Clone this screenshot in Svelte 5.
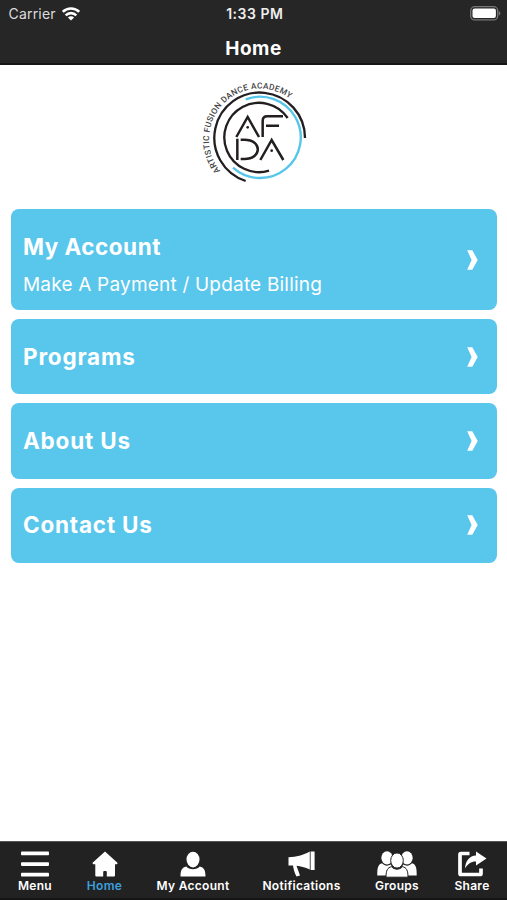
<script>
  const links = [
    { title: "My Account", detail: "Make A Payment / Update Billing" },
    { title: "Programs" },
    { title: "About Us" },
    { title: "Contact Us" }
  ];

  const tabs = [
    { id: "menu", label: "Menu", width: 70 },
    { id: "home", label: "Home", width: 69 },
    { id: "account", label: "My Account", width: 108 },
    { id: "notifications", label: "Notifications", width: 109 },
    { id: "groups", label: "Groups", width: 82 },
    { id: "share", label: "Share", width: 68 }
  ];

  let active = $state("home");
</script>

<div class="app">
  <header>
    <div class="status">
      <div class="carrier">
        <span>Carrier</span>
        <svg width="18" height="14" viewBox="0 0 18 14" fill="none" stroke="#fff" stroke-width="2.6">
          <path d="M.8 4.900a11.700 11.700 0 0 1 16.400 0" />
          <path d="M3.700 8.300a7.500 7.500 0 0 1 10.600 0" />
          <path d="M9 13.600 5.900 10.500a4.400 4.400 0 0 1 6.200 0z" fill="#fff" stroke="none" />
        </svg>
      </div>
      <span class="time">1:33 PM</span>
      <svg class="battery" width="31" height="15" viewBox="0 0 31 15">
        <rect x=".7" y=".7" width="27" height="13.2" rx="4" fill="none" stroke="#777" stroke-width="1.3" />
        <rect x="2.5" y="2.5" width="23.4" height="9.6" rx="2" fill="#fff" />
        <path d="M28.8 5v4.6c2-.8 2-3.8 0-4.6z" fill="#777" />
      </svg>
    </div>
    <h1>Home</h1>
  </header>

  <main>
    <svg class="logo" viewBox="0 0 360 360" fill="none">
      <defs>
        <path id="ring" d="M78.500 303A152 152 0 1 1 349 204" />
      </defs>
      <g stroke="#231f20" stroke-width="7">
        <path d="M155 333A136 136 0 1 1 333 204" />
        <path d="M225 302A104 104 0 1 1 281 144" />
      </g>
      <text class="ring-text">
        <textPath href="#ring" textLength="438" lengthAdjust="spacing">ARTISTIC FUSION DANCE ACADEMY</textPath>
      </text>
      <path d="M155 88A122 122 0 1 1 117 293" stroke="#55c5e9" stroke-width="7" />
      <g stroke="#231f20" stroke-width="7.5">
        <path d="M127 201 161 141 195 201" />
        <path d="M206 201V153Q206 139 220 139H267M216 167H255" />
        <path d="M130 206V270M140 209H151C205 209 205 267 151 267H140" />
        <path d="M199 270 233 210 268 270" />
      </g>
      <g fill="#231f20">
        <circle cx="161" cy="172" r="4" />
        <circle cx="233" cy="242" r="4" />
      </g>
    </svg>

    <nav class="links">
      {#each links as link}
        <button class="card" class:tall={link.detail}>
          <span class="copy">
            <strong>{link.title}</strong>
            {#if link.detail}
              <span class="detail">{link.detail}</span>
            {/if}
          </span>
          <svg class="chevron" width="11" height="20" viewBox="0 0 11 20" fill="#fff">
            <path d="M.2.2H5.300L10.700 10 5.300 19.800H.2L4.600 10z" />
          </svg>
        </button>
      {/each}
    </nav>
  </main>

  <footer>
    {#each tabs as tab}
      <button
        class="tab"
        class:active={active === tab.id}
        style="width: {tab.width}px"
        onclick={() => (active = tab.id)}
      >
        {#if tab.id === "menu"}
          <svg width="30" height="28" viewBox="0 0 30 28" fill="#fff">
            <rect x="1" y="1.5" width="28" height="3.7" rx=".8" />
            <rect x="1" y="12.2" width="28" height="3.7" rx=".8" />
            <rect x="1" y="22.8" width="28" height="3.7" rx=".8" />
          </svg>
        {:else if tab.id === "home"}
          <svg width="26" height="28" viewBox="0 0 26 28" fill="#fff">
            <path d="M13 1.500 25.700 12.900 24.900 14.200H23V25.600q0 1-1 1h-7.200v-4.500q0-1-1-1h-1.600q-1 0-1 1v4.500H4.300q-1 0-1-1V14.200H1.200L.3 12.900z" />
          </svg>
        {:else if tab.id === "account"}
          <svg width="26" height="28" viewBox="0 0 26 28" fill="#fff">
            <ellipse cx="13" cy="9.600" rx="6.500" ry="7.800" />
            <path d="M6.300 16.500C9 20.200 17 20.200 19.700 16.500 24 17.500 25.500 20 25.500 26.600H.5C.5 20 2 17.500 6.300 16.500z" />
          </svg>
        {:else if tab.id === "notifications"}
          <svg width="27" height="28" viewBox="0 0 27 28" fill="#fff">
            <path d="M.5 7.200C9 7 14 5.500 21.800 1.500V19.500C17 17.400 12.500 15.900 8.500 15.700L12 25.500 8.500 26.500C6.500 23 5.500 19.500 5 15.600H.5z" />
            <rect x="22.600" y="1.500" width="4" height="18.500" />
          </svg>
        {:else if tab.id === "groups"}
          <svg width="40" height="28" viewBox="0 0 40 28" fill="#fff">
            <ellipse cx="10" cy="7.800" rx="5.700" ry="6.600" />
            <ellipse cx="30" cy="7.800" rx="5.700" ry="6.600" />
            <path d="M5 13.300C8 16.500 11 16 14 14.500L17 25.500H.3C.2 18 1 14.500 5 13.300zM35 13.300C32 16.500 29 16 26 14.500L23 25.500H39.700C39.800 18 39 14.500 35 13.300z" />
            <g stroke="#222" stroke-width="1">
              <path d="M14.500 16.700C17.500 20 22.500 20 25.500 16.700 29.500 17.500 31 20.500 31 27.200H9C9 20.500 10.500 17.500 14.500 16.700z" />
              <ellipse cx="20" cy="10.500" rx="6.300" ry="7.600" />
            </g>
          </svg>
        {:else}
          <svg width="30" height="28" viewBox="0 0 30 28" fill="#fff">
            <path d="M12.500 3.500H4Q3 3.500 3 4.500V23.500Q3 24.500 4 24.500H23Q24 24.500 24 23.500V18.500" fill="none" stroke="#fff" stroke-width="3.700" />
            <path d="M8 18.500C8.500 10.500 12.500 6 19 5.500V1.600L29.500 8.600 19 15.600V11.600C14 11.500 11 14 8 18.500z" />
          </svg>
        {/if}
        <span>{tab.label}</span>
      </button>
    {/each}
  </footer>
</div>

<style>
  :global(body) {
    margin: 0;
    background: #fff;
  }

  .app {
    display: flex;
    flex-direction: column;
    height: 900px;
    font-family: Inter, "Liberation Sans", sans-serif;
    color: #fff;
  }

  header {
    box-sizing: border-box;
    height: 65px;
    background: #262626;
    border-bottom: 2px solid #161616;
  }

  .status {
    display: grid;
    grid-template-columns: 1fr auto 1fr;
    align-items: center;
    height: 27px;
    padding: 0 6px 0 8.5px;
    font-size: 14px;
  }

  .carrier {
    display: flex;
    align-items: center;
    gap: 6px;
    color: #ddd;
    letter-spacing: 0.2px;
  }

  .time {
    font-size: 14px;
    font-weight: 600;
    letter-spacing: 0.5px;
    color: #eee;
  }

  .battery {
    justify-self: end;
  }

  h1 {
    margin: 0;
    font-size: 19px;
    font-weight: 700;
    line-height: 43px;
    letter-spacing: 0.5px;
    text-align: center;
  }

  main {
    flex: 1;
  }

  .logo {
    display: block;
    width: 120px;
    height: 120px;
    margin: 5px auto 0;
  }

  .ring-text {
    font-family: Roboto, sans-serif;
    font-size: 25px;
    font-weight: 500;
    fill: #444;
  }

  .links {
    display: flex;
    flex-direction: column;
    gap: 9px;
    padding: 19px 10px 0 11px;
  }

  button {
    border: 0;
    font-family: inherit;
    color: inherit;
    cursor: pointer;
  }

  .card {
    display: flex;
    align-items: center;
    justify-content: space-between;
    height: 75.3px;
    padding: 0 19px 0 12px;
    border-radius: 8px;
    background: #59c6ec;
    text-align: left;
  }

  .card.tall {
    height: 101px;
  }

  .copy {
    display: flex;
    flex-direction: column;
    gap: 11px;
  }

  .tall .copy {
    padding-top: 12px;
  }

  strong {
    font-size: 22.5px;
    font-weight: 700;
    line-height: 28px;
    letter-spacing: 0.8px;
  }

  .tall strong {
    letter-spacing: 0.5px;
  }

  .detail {
    font-size: 19px;
    line-height: 26px;
    letter-spacing: 0.2px;
  }

  footer {
    display: flex;
    box-sizing: border-box;
    height: 59px;
    border-top: 1px solid #555;
    background: #222;
    box-shadow: inset 0 -2px #151515;
  }

  .tab {
    display: flex;
    flex-direction: column;
    align-items: center;
    padding: 8px 0 0;
    background: none;
    font-size: 12px;
    font-weight: 600;
    line-height: 16px;
    letter-spacing: 0.3px;
    white-space: nowrap;
  }

  .tab.active {
    color: #3c9fdd;
  }
</style>
